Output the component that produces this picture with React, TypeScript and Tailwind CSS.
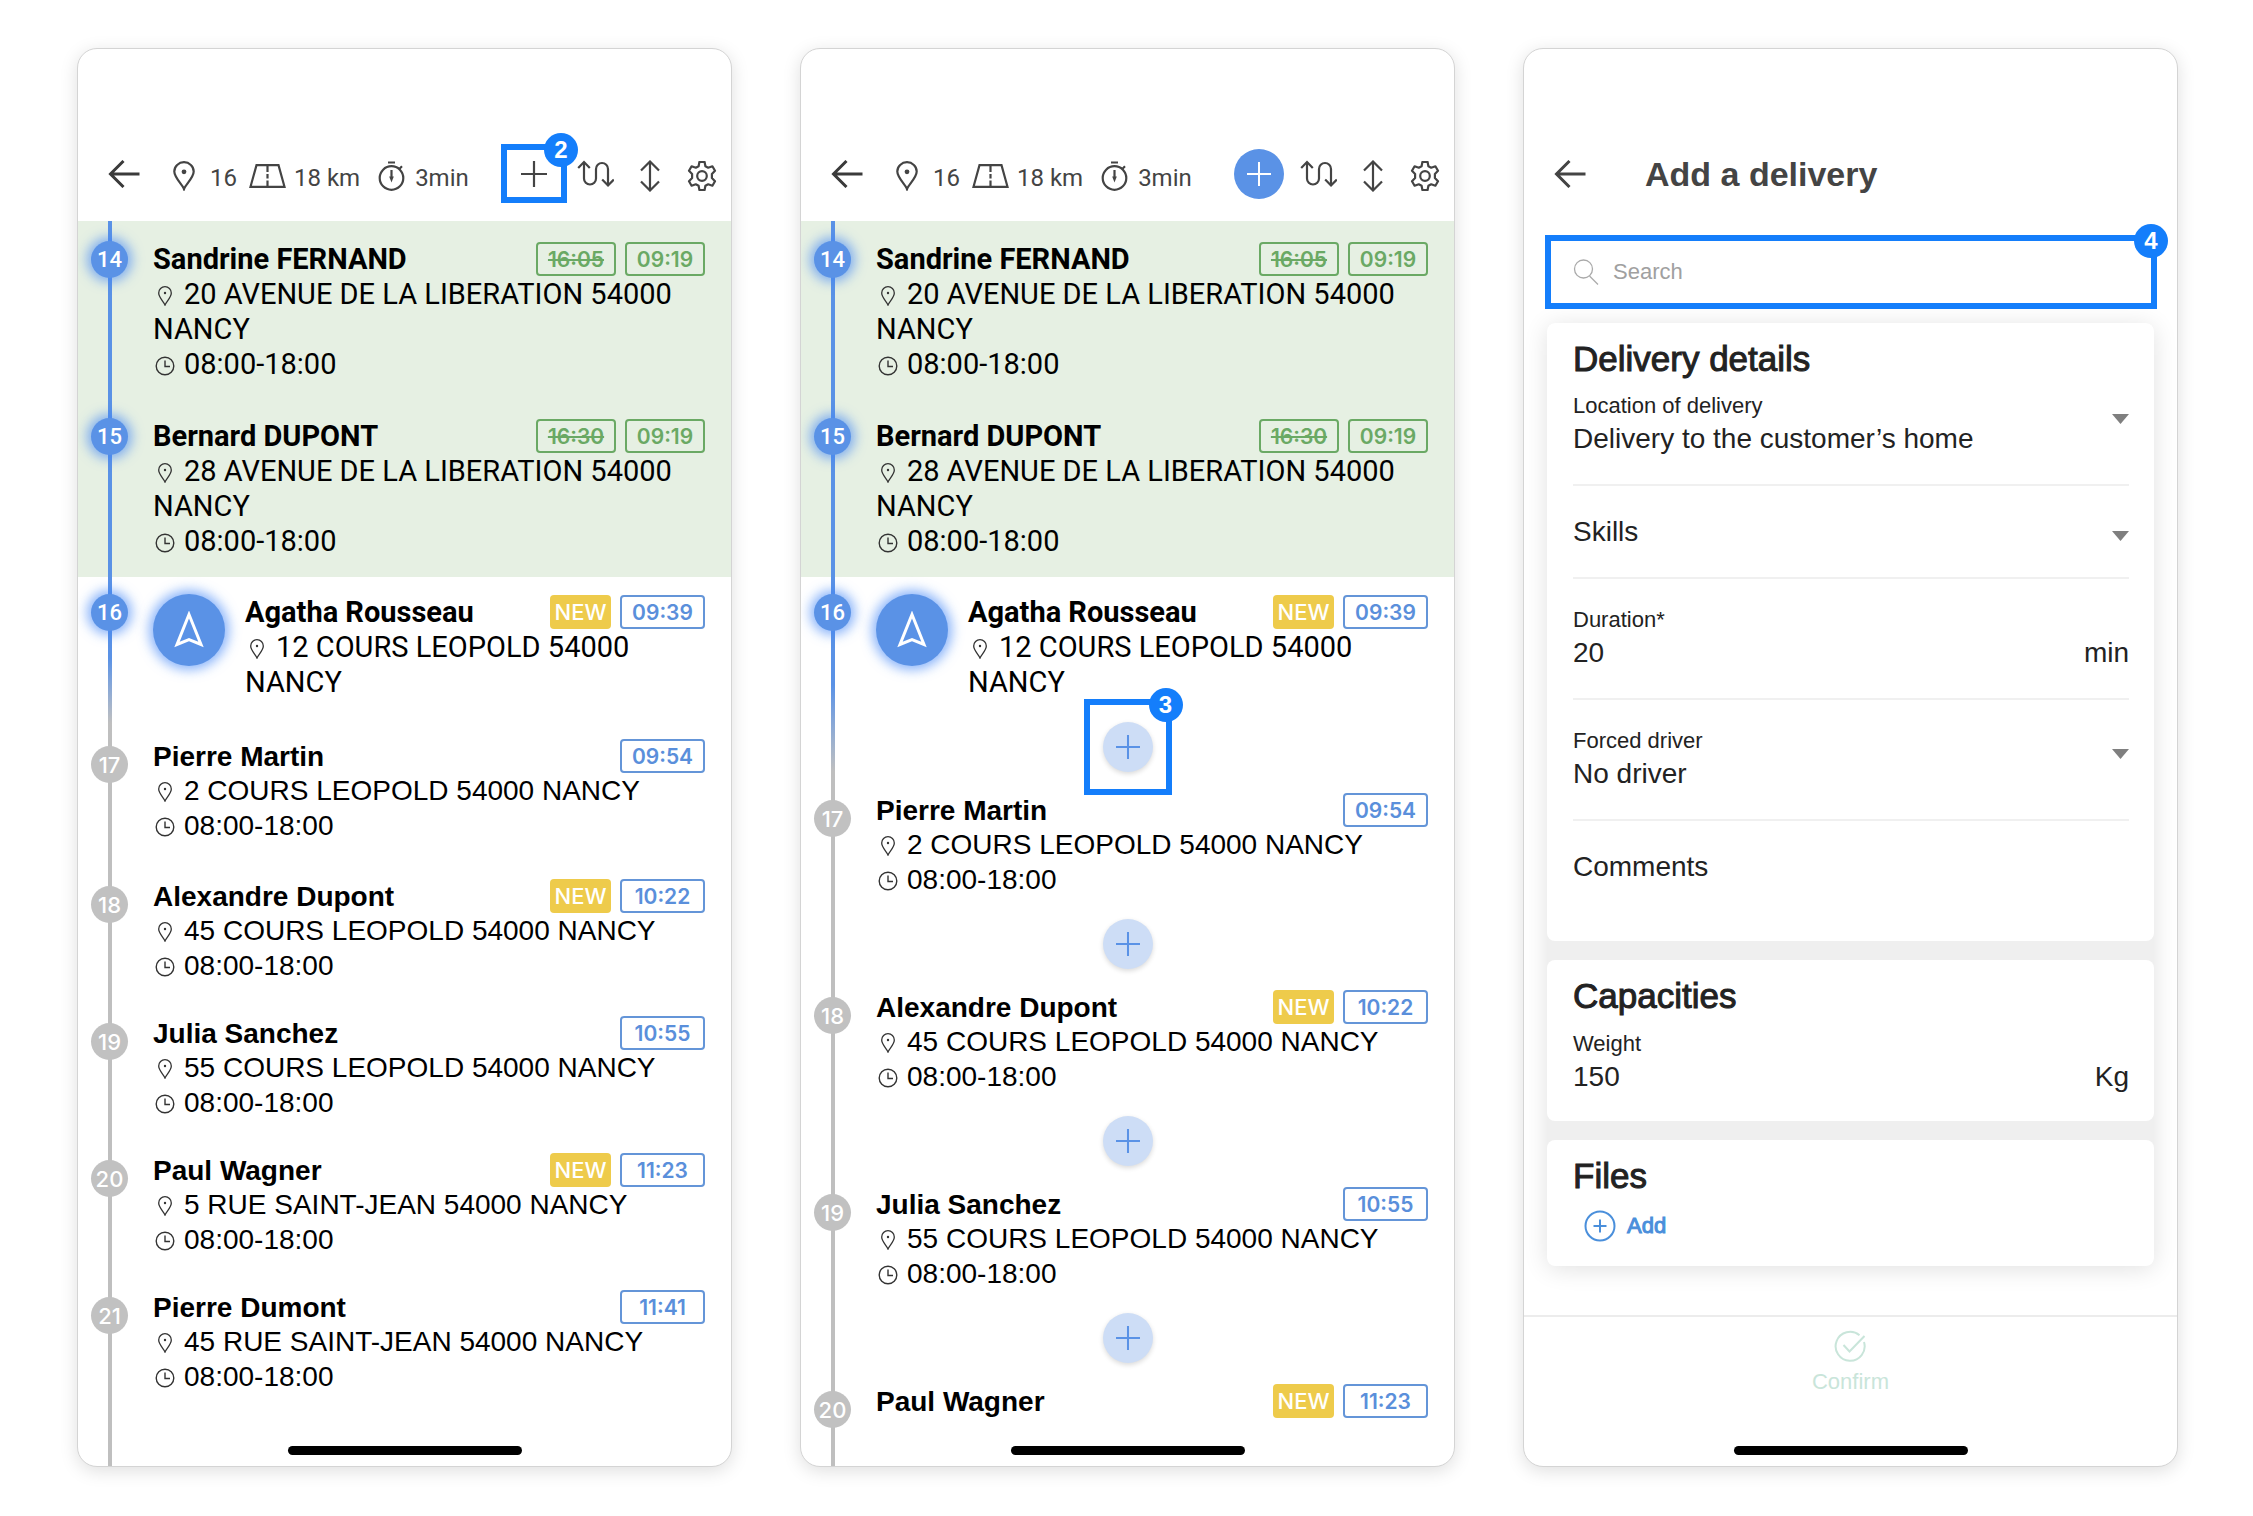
import { useState } from "react"
import type { ReactNode } from "react"

type Stop = {
  number: number
  name: string
  address: string
  hours?: string
  time: string
  plannedTime?: string
  isNew?: boolean
  state: "done" | "current" | "todo"
}

const STOPS: Stop[] = [
  { number: 14, name: "Sandrine FERNAND", address: "20 AVENUE DE LA LIBERATION 54000 NANCY", hours: "08:00-18:00", plannedTime: "16:05", time: "09:19", state: "done" },
  { number: 15, name: "Bernard DUPONT", address: "28 AVENUE DE LA LIBERATION 54000 NANCY", hours: "08:00-18:00", plannedTime: "16:30", time: "09:19", state: "done" },
  { number: 16, name: "Agatha Rousseau", address: "12 COURS LEOPOLD 54000 NANCY", time: "09:39", isNew: true, state: "current" },
  { number: 17, name: "Pierre Martin", address: "2 COURS LEOPOLD 54000 NANCY", hours: "08:00-18:00", time: "09:54", state: "todo" },
  { number: 18, name: "Alexandre Dupont", address: "45 COURS LEOPOLD 54000 NANCY", hours: "08:00-18:00", time: "10:22", isNew: true, state: "todo" },
  { number: 19, name: "Julia Sanchez", address: "55 COURS LEOPOLD 54000 NANCY", hours: "08:00-18:00", time: "10:55", state: "todo" },
  { number: 20, name: "Paul Wagner", address: "5 RUE SAINT-JEAN 54000 NANCY", hours: "08:00-18:00", time: "11:23", isNew: true, state: "todo" },
  { number: 21, name: "Pierre Dumont", address: "45 RUE SAINT-JEAN 54000 NANCY", hours: "08:00-18:00", time: "11:41", state: "todo" },
]

/* ---------- Icons ---------- */

function BackIcon({ strokeWidth }: { strokeWidth: number }) {
  return (
    <svg className="h-7 w-8" viewBox="0 0 32 28" fill="none" stroke="currentColor" strokeWidth={strokeWidth}>
      <path d="M31.500 14H2M15.500 1L2.500 14l13 13" />
    </svg>
  )
}

function PinIcon() {
  return (
    <svg className="h-[30px] w-[22px]" viewBox="0 0 22 30" fill="none" stroke="currentColor" strokeWidth="2.200">
      <path d="M11 28C9.500 24 1.300 16.500 1.300 10.500a9.700 9.300 0 0 1 19.400 0C20.700 16.500 12.500 24 11 28z" />
      <circle cx="11" cy="10.800" r="2.400" fill="currentColor" stroke="none" />
    </svg>
  )
}

function RoadIcon() {
  return (
    <svg className="h-6 w-[37px]" viewBox="0 0 37 24" fill="none" stroke="currentColor" strokeWidth="2.200">
      <path d="M7.500 1.200h22L35.500 22.800H1.500z" />
      <path d="M18.500 1v7M18.500 10v4.500M18.500 16.500V23" />
    </svg>
  )
}

function StopwatchIcon() {
  return (
    <svg className="h-[30px] w-[27px]" viewBox="0 0 27 30" fill="none" stroke="currentColor" strokeWidth="2.200">
      <circle cx="13.500" cy="17" r="11.800" />
      <path d="M10 1.500h7M21.500 7.800l2.500-2.500" />
      <path d="M13.500 9v8" />
      <path d="M11.200 15.500h4.600l-2.300 6z" fill="currentColor" stroke="none" />
    </svg>
  )
}

function PlusIcon({ className }: { className: string }) {
  return (
    <svg className={className} viewBox="0 0 26 26" fill="none" stroke="currentColor" strokeWidth="2.200">
      <path d="M13 0v26M0 13h26" />
    </svg>
  )
}

function RouteIcon() {
  return (
    <svg className="h-7 w-[37px]" viewBox="0 0 37 28" fill="none" stroke="currentColor" strokeWidth="2.200">
      <path d="M7 2v16.500a6 6 0 0 0 12 0V9a6 6 0 0 1 12 0v16.500" />
      <path d="M1.200 8L7 2l5.800 6M25.200 19.500l5.800 6 5.800-6" />
    </svg>
  )
}

function UpDownIcon() {
  return (
    <svg className="h-8 w-5" viewBox="0 0 20 32" fill="none" stroke="currentColor" strokeWidth="2.200">
      <path d="M10 2v28M1 10.500L10 1.500l9 9M1 21.500l9 9 9-9" />
    </svg>
  )
}

function GearIcon() {
  return (
    <svg className="size-[30px]" viewBox="0 0 30 30" fill="none" stroke="currentColor" strokeWidth="2.200" strokeLinejoin="round">
      <path d="M12.400 1h5.200l.8 4.200 2.800 1.500 4.200-1.400 2.600 4.500-3.100 3.200v4l3.100 3.200-2.600 4.500-4.200-1.400-2.800 1.500-.8 4.200h-5.200l-.8-4.200-2.800-1.500-4.200 1.400L2 20.200 5.100 17v-4L2 9.800l2.600-4.500 4.200 1.400 2.800-1.500z" />
      <circle cx="15" cy="15" r="4.800" />
    </svg>
  )
}

function SmallPinIcon() {
  return (
    <svg className="ml-[2px] mr-[9px] inline size-5 align-[-2px] text-[#333]" viewBox="0 0 20 20" fill="none" stroke="currentColor" strokeWidth="1.300">
      <path d="M10 19C9 16 3.700 11.500 3.700 7a6.300 6.300 0 0 1 12.600 0C16.300 11.500 11 16 10 19z" />
      <circle cx="10" cy="7" r="1.200" fill="currentColor" stroke="none" />
    </svg>
  )
}

function SmallClockIcon() {
  return (
    <svg className="ml-[2px] mr-[9px] inline size-5 align-[-2px] text-[#333]" viewBox="0 0 20 20" fill="none" stroke="currentColor" strokeWidth="1.400">
      <circle cx="10" cy="10" r="8.800" />
      <path d="M10 4.500V10.500h5" />
    </svg>
  )
}

function NavigateIcon() {
  return (
    <svg className="h-[38px] w-8" viewBox="0 0 32 38" fill="none" stroke="currentColor" strokeWidth="3">
      <path d="M16 3.500L28 33.500 16 28.500 4 33.500z" />
    </svg>
  )
}

function SearchIcon() {
  return (
    <svg className="size-[26px]" viewBox="0 0 26 26" fill="none" stroke="currentColor" strokeWidth="1.300">
      <circle cx="10.500" cy="10" r="9" />
      <path d="M16.500 17L25 25.500" />
    </svg>
  )
}

function CaretIcon({ className }: { className: string }) {
  return (
    <svg className={`pointer-events-none h-[10px] w-[17px] shrink-0 text-[#7f7f7f] ${className}`} viewBox="0 0 17 10" fill="currentColor">
      <path d="M0 0h17L8.500 10z" />
    </svg>
  )
}

/* ---------- Shared parts ---------- */

function Phone({ children }: { children: ReactNode }) {
  return (
    <section className="relative flex min-w-0 flex-1 flex-col overflow-hidden rounded-[20px] border border-[#d4d4d4] bg-white shadow-[0_4px_18px_rgba(0,0,0,0.13)]">
      {children}
      <div className="absolute bottom-[11px] left-1/2 h-[9px] w-[234px] -translate-x-1/2 rounded-full bg-black" />
    </section>
  )
}

// Blue tutorial frame with its step number on the top right corner
function Step({ number, className, children }: { number: number; className: string; children: ReactNode }) {
  return (
    <div className={`relative flex items-center justify-center border-[6px] border-[#147efb] ${className}`}>
      {children}
      <span className="absolute -right-[17px] -top-[17px] flex size-[34px] items-center justify-center rounded-full bg-[#147efb] font-['Liberation_Sans',sans-serif] text-2xl font-bold leading-none text-white">
        {number}
      </span>
    </div>
  )
}

function RouteHeader({ adding }: { adding: boolean }) {
  return (
    <header className="flex items-center pb-[18px] pl-[30px] pr-[14px] pt-[95px] font-['Roboto',sans-serif] text-2xl leading-7 text-[#444]">
      <button aria-label="Back" className="mr-[33px] text-[#3a3a3a]">
        <BackIcon strokeWidth={3} />
      </button>
      <div className="flex flex-1 items-center pt-1">
        <PinIcon />
        <span className="ml-[15px] mr-3 pt-1">16</span>
        <RoadIcon />
        <span className="ml-2 mr-[18px] whitespace-nowrap pt-1">18 km</span>
        <StopwatchIcon />
        <span className="ml-[10px] pt-1">3min</span>
      </div>
      {adding ? (
        <button aria-label="Add a stop" className="my-1 mr-4 flex size-[50px] items-center justify-center rounded-full bg-[#5a92e6] text-white">
          <PlusIcon className="size-6" />
        </button>
      ) : (
        <Step number={2} className="mr-[10px] h-[59px] w-[66px]">
          <button aria-label="Add a stop">
            <PlusIcon className="size-[26px]" />
          </button>
        </Step>
      )}
      <div className="flex h-[59px] items-center pt-1">
        <button aria-label="Reorder route" className="mb-1 mr-[26px]"><RouteIcon /></button>
        <button aria-label="Reverse route" className="mr-[27px]"><UpDownIcon /></button>
        <button aria-label="Settings"><GearIcon /></button>
      </div>
    </header>
  )
}

function Badges({ stop }: { stop: Stop }) {
  const done = stop.state === "done"
  const box = "flex h-[34px] items-center justify-center rounded-[4px] border-2"
  return (
    <div className="flex shrink-0 gap-[9px] font-['Inter',sans-serif] text-[21px] font-semibold leading-none">
      {stop.plannedTime && (
        <s className={`${box} w-20 border-[#6aa964] text-[#6aa964]`}>{stop.plannedTime}</s>
      )}
      {stop.isNew && (
        <span className="flex h-[34px] w-[61px] items-center justify-center rounded-[4px] bg-[#eecb4b] text-[22px] font-medium text-white">NEW</span>
      )}
      <span className={done ? `${box} w-20 border-[#6aa964] text-[#6aa964]` : `${box} w-[85px] border-[#6495d8] text-[#5a8fdb]`}>
        {stop.time}
      </span>
    </div>
  )
}

function StopDetails({ stop, nameOnly }: { stop: Stop; nameOnly?: boolean }) {
  const todo = stop.state === "todo"
  return (
    <div className="min-w-0 flex-1">
      <div className={`flex items-center justify-between ${todo ? "h-[34px]" : "h-9"}`}>
        <h3 className="whitespace-nowrap font-bold">{stop.name}</h3>
        <Badges stop={stop} />
      </div>
      {!nameOnly && (
        <>
          <p className="w-fit"><SmallPinIcon />{stop.address}</p>
          {stop.hours && <p className="w-fit"><SmallClockIcon />{stop.hours}</p>}
        </>
      )}
    </div>
  )
}

const LINE_STYLES = {
  done: "bg-[#5a92e6]",
  current: "bg-linear-to-b from-[#5a92e6] from-50% to-[#bfbfbf] to-90%",
  todo: "bg-[#bfbfbf]",
}

function StopRow({ stop, spacing, nameOnly, insert }: { stop: Stop; spacing: string; nameOnly?: boolean; insert?: ReactNode }) {
  const todo = stop.state === "todo"
  return (
    <li
      className={`relative leading-[35px] text-black ${spacing} ${
        todo ? "font-['Liberation_Sans',sans-serif] text-[28px]" : "font-['Roboto',sans-serif] text-[29px]"
      }`}
    >
      <div className={`absolute inset-y-0 left-[30px] w-1 ${LINE_STYLES[stop.state]}`} />
      <div className="relative flex pl-[13px] pr-[26px]">
        <span
          className={`mr-[25px] flex size-[37px] shrink-0 items-center justify-center rounded-full text-[22px] font-medium leading-none text-white ${
            todo
              ? "mt-[7px] bg-[#c1c1c1] font-['Inter',sans-serif]"
              : "bg-[#5a92e6] shadow-[0_0_12px_4px_rgba(60,130,246,0.6)]"
          }`}
        >
          {stop.number}
        </span>
        {stop.state === "current" && (
          <button
            aria-label="Navigate"
            className="mr-5 flex size-[72px] shrink-0 items-center justify-center rounded-full bg-[#5a92e6] text-white shadow-[0_0_12px_4px_rgba(60,130,246,0.6)]"
          >
            <NavigateIcon />
          </button>
        )}
        <StopDetails stop={stop} nameOnly={nameOnly} />
      </div>
      {insert && <div className="relative flex h-[93px] items-center justify-center">{insert}</div>}
    </li>
  )
}

function DoneStops() {
  return (
    <ul className="bg-[#e6f0e3]">
      <StopRow stop={STOPS[0]} spacing="pt-5 pb-4" />
      <StopRow stop={STOPS[1]} spacing="pt-5 pb-[18px]" />
    </ul>
  )
}

function InsertButton() {
  return (
    <button aria-label="Insert a delivery here" className="flex size-[50px] items-center justify-center rounded-full bg-[#cdddf6] text-[#5a92e6] shadow-[0_2px_5px_rgba(0,0,0,0.15)]">
      <PlusIcon className="size-6" />
    </button>
  )
}

/* ---------- Screens ---------- */

function RouteScreen() {
  return (
    <Phone>
      <RouteHeader adding={false} />
      <DoneStops />
      <ul>
        <StopRow stop={STOPS[2]} spacing="pt-[17px] pb-[39px]" />
        <StopRow stop={STOPS[3]} spacing="pb-9" />
        {STOPS.slice(4).map(stop => (
          <StopRow key={stop.number} stop={stop} spacing="pb-[33px]" />
        ))}
      </ul>
      <div className="ml-[30px] w-1 flex-1 bg-[#bfbfbf]" />
    </Phone>
  )
}

function InsertScreen() {
  return (
    <Phone>
      <RouteHeader adding />
      <DoneStops />
      <ul>
        <StopRow
          stop={STOPS[2]}
          spacing="pt-[17px]"
          insert={<Step number={3} className="h-24 w-[88px]"><InsertButton /></Step>}
        />
        {STOPS.slice(3, 6).map(stop => (
          <StopRow key={stop.number} stop={stop} spacing="" insert={<InsertButton />} />
        ))}
        <StopRow stop={STOPS[6]} spacing="" nameOnly />
      </ul>
      <div className="ml-[30px] w-1 flex-1 bg-[#bfbfbf]" />
    </Phone>
  )
}

function Card({ title, children }: { title: string; children: ReactNode }) {
  return (
    <section className="rounded-lg bg-white pl-[26px] pr-[25px] pt-4">
      <h2 className="text-[35px] leading-10 [-webkit-text-stroke:1px_#222]">{title}</h2>
      {children}
    </section>
  )
}

function SelectField({ id, label, value, className }: { id: string; label: string; value: string; className: string }) {
  return (
    <div className={`flex items-center border-b-2 border-[#f0f0f0] ${className}`}>
      <div className="flex-1">
        <label htmlFor={id} className="block text-[22px] leading-8">{label}</label>
        <select id={id} className="mt-px block h-8 w-full appearance-none bg-transparent leading-8 outline-none">
          <option>{value}</option>
        </select>
      </div>
      <CaretIcon className="mb-2" />
    </div>
  )
}

function NumberField({ id, label, unit, value, onChange, className }: {
  id: string
  label: string
  unit: string
  value: string
  onChange: (value: string) => void
  className: string
}) {
  return (
    <div className={className}>
      <label htmlFor={id} className="block text-[22px] leading-8">{label}</label>
      <div className="mt-px flex leading-8">
        <input
          id={id}
          inputMode="numeric"
          value={value}
          onChange={e => onChange(e.target.value)}
          className="h-8 min-w-0 flex-1 bg-transparent outline-none"
        />
        <span>{unit}</span>
      </div>
    </div>
  )
}

function AddDeliveryScreen() {
  const [duration, setDuration] = useState("20")
  const [weight, setWeight] = useState("150")

  return (
    <Phone>
      <div className="flex flex-1 flex-col font-['Liberation_Sans',sans-serif] text-[28px] text-[#222]">
        <header className="flex items-center pb-[38px] pl-[30px] pt-[102px] text-[#444]">
          <button aria-label="Back" className="mr-[59px]">
            <BackIcon strokeWidth={3} />
          </button>
          <h1 className="text-[34px] font-bold leading-[46px]">Add a delivery</h1>
        </header>

        <Step number={4} className="ml-[21px] mr-5 h-[74px]">
          <label htmlFor="search" className="ml-[22px] text-[#aaa]"><SearchIcon /></label>
          <input
            id="search"
            placeholder="Search"
            className="ml-[14px] h-full min-w-0 flex-1 bg-transparent text-[22px] outline-none placeholder:text-[#a0a0a0]"
          />
        </Step>

        <div className="ml-[23px] mr-[23px] mt-[14px] flex flex-col gap-[19px] rounded-lg bg-[#efefef] shadow-[0_3px_24px_rgba(0,0,0,0.12)]">
          <Card title="Delivery details">
            <SelectField id="location" label="Location of delivery" value="Delivery to the customer’s home" className="pb-[29px] pt-[11px]" />
            <div className="flex items-center border-b-2 border-[#f0f0f0]">
              <select aria-label="Skills" className="h-[91px] flex-1 appearance-none bg-transparent outline-none">
                <option>Skills</option>
              </select>
              <CaretIcon className="mt-2" />
            </div>
            <NumberField id="duration" label="Duration*" unit="min" value={duration} onChange={setDuration} className="border-b-2 border-[#f0f0f0] pb-[29px] pt-[25px]" />
            <SelectField id="driver" label="Forced driver" value="No driver" className="pb-[29px] pt-[25px]" />
            <textarea
              aria-label="Comments"
              placeholder="Comments"
              rows={1}
              className="mb-10 mt-[30px] block h-[50px] w-full resize-none bg-transparent leading-8 outline-none placeholder:text-[#222]"
            />
          </Card>
          <Card title="Capacities">
            <NumberField id="weight" label="Weight" unit="Kg" value={weight} onChange={setWeight} className="pb-7 pt-3" />
          </Card>
          <Card title="Files">
            <button className="mb-6 ml-[11px] mt-[14px] flex items-center gap-[11px] text-[22px] leading-8 text-[#4a8fdb]">
              <svg className="size-8" viewBox="0 0 32 32" fill="none" stroke="currentColor" strokeWidth="2">
                <circle cx="16" cy="16" r="14.500" />
                <path d="M16 9.500v13M9.500 16h13" />
              </svg>
              <span className="[-webkit-text-stroke:1px_#4a8fdb]">Add</span>
            </button>
          </Card>
        </div>

        <footer className="mt-auto flex h-[151px] justify-center border-t-2 border-[#ececec] pt-[13px]">
          <button className="flex h-fit flex-col items-center gap-1 text-[22px] leading-8 text-[#c9e5da]">
            <svg className="size-8" viewBox="0 0 32 32" fill="none" stroke="currentColor" strokeWidth="2">
              <path d="M25.500 5.200A14.500 14.500 0 1 0 30 12" />
              <path d="M9.500 15l6 6.500L30.500 6" />
            </svg>
            Confirm
          </button>
        </footer>
      </div>
    </Phone>
  )
}

export default function App() {
  return (
    <main className="flex min-h-screen gap-[68px] bg-white pb-[49px] pl-[77px] pr-[75px] pt-12">
      <RouteScreen />
      <InsertScreen />
      <AddDeliveryScreen />
    </main>
  )
}
